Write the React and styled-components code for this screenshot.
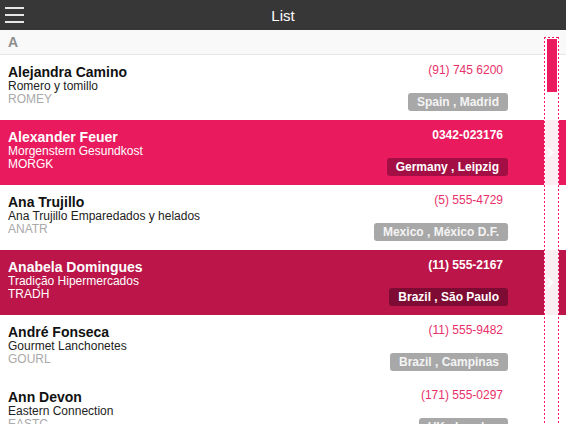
import React from 'react'
import styled, { createGlobalStyle } from 'styled-components'

const GlobalStyle = createGlobalStyle`
  html, body {
    margin: 0;
    padding: 0;
    background: #fff;
    overflow: hidden;
  }
  body {
    font-family: 'Liberation Sans', Arial, sans-serif;
  }
`

const customers = [
  { name: 'Alejandra Camino', company: 'Romero y tomillo', code: 'ROMEY', phone: '(91) 745 6200', place: 'Spain , Madrid' },
  { name: 'Alexander Feuer', company: 'Morgenstern Gesundkost', code: 'MORGK', phone: '0342-023176', place: 'Germany , Leipzig', state: 'selected' },
  { name: 'Ana Trujillo', company: 'Ana Trujillo Emparedados y helados', code: 'ANATR', phone: '(5) 555-4729', place: 'Mexico , México D.F.' },
  { name: 'Anabela Domingues', company: 'Tradição Hipermercados', code: 'TRADH', phone: '(11) 555-2167', place: 'Brazil , São Paulo', state: 'active' },
  { name: 'André Fonseca', company: 'Gourmet Lanchonetes', code: 'GOURL', phone: '(11) 555-9482', place: 'Brazil , Campinas' },
  { name: 'Ann Devon', company: 'Eastern Connection', code: 'EASTC', phone: '(171) 555-0297', place: 'UK , London' },
]

const rowBg = { selected: '#e91a5e', active: '#bb1549' }
const badgeBg = { selected: '#a30f44', active: '#7e0b33' }

const dots = 'repeating-linear-gradient(to bottom, #f5146a 0 2px, transparent 2px 4px)'
const hdots = 'repeating-linear-gradient(to right, #f5146a 0 2px, transparent 2px 4px)'

const Screen = styled.div`
  position: relative;
  width: 566px;
  height: 424px;
  overflow: hidden;
`

const TitleBar = styled.div`
  display: flex;
  align-items: center;
  justify-content: center;
  position: relative;
  height: 30px;
  background: #373737;
  color: #fff;
  font-size: 15px;
`

const MenuButton = styled.div`
  position: absolute;
  left: 5px;
  top: 7px;
  width: 19px;
  display: flex;
  flex-direction: column;
  gap: 5px;

  span {
    display: block;
    height: 2px;
    background: #e6e6e6;
  }
`

const GroupHeader = styled.div`
  height: 24px;
  padding-left: 8px;
  background: #f9f9f9;
  border-bottom: 1px solid #e6e6e6;
  color: #8e8e8e;
  font-size: 14px;
  font-weight: bold;
  line-height: 24px;
`

const Row = styled.div`
  display: flex;
  height: 65px;
  box-sizing: border-box;
  padding: 9px 14px 0 8px;
  background: ${({ state }) => rowBg[state] || '#fff'};
  color: ${({ state }) => (state ? '#fff' : '#111')};
`

const Main = styled.div`
  flex: 1;
  min-width: 0;
`

const Name = styled.div`
  font-size: 14px;
  font-weight: bold;
  line-height: 16px;
`

const Company = styled.div`
  font-size: 12px;
  line-height: 13px;
  color: ${({ state }) => (state ? '#fff' : '#222')};
`

const Code = styled.div`
  font-size: 12px;
  line-height: 13px;
  color: ${({ state }) => (state ? '#fff' : '#a9a9a9')};
`

const Side = styled.div`
  display: flex;
  flex-direction: column;
  align-items: flex-end;
  margin-right: 37px;
`

const Phone = styled.div`
  margin-top: -1px;
  margin-right: 5px;
  font-size: 12px;
  line-height: 14px;
  font-weight: ${({ state }) => (state ? 'bold' : 'normal')};
  color: ${({ state }) => (state ? '#fff' : '#e8306a')};
`

const Badge = styled.div`
  margin-top: 16px;
  height: 18px;
  padding: 0 9px;
  border-radius: 3px;
  background: ${({ state }) => badgeBg[state] || '#a8a8a8'};
  color: ${({ state }) => (state ? '#fff' : '#f4f4f4')};
  font-size: 12px;
  font-weight: bold;
  line-height: 18px;
  white-space: nowrap;
`

const Chevron = styled.div`
  align-self: center;
  margin-top: -9px;
  width: 5px;
  height: 5px;
  border-top: 2px solid ${({ state }) => (state ? '#fff' : '#cfcfcf')};
  border-right: 2px solid ${({ state }) => (state ? '#fff' : '#cfcfcf')};
  transform: rotate(45deg);
`

const ScrollTrack = styled.div`
  position: absolute;
  left: 544px;
  top: 37px;
  bottom: -2px;
  width: 15px;
  box-sizing: border-box;
  padding: 2px 0 0 3px;
  background:
    ${dots} left top / 1px 100% no-repeat,
    ${dots} right top / 1px 100% no-repeat,
    ${hdots} left top / 100% 1px no-repeat,
    rgba(255, 255, 255, 0.93);
`

const ScrollThumb = styled.div`
  width: 10px;
  height: 53px;
  background: #e91a5e;
`

function CustomerRow({ item }) {
  const { state } = item
  return (
    <Row state={state}>
      <Main>
        <Name>{item.name}</Name>
        <Company state={state}>{item.company}</Company>
        <Code state={state}>{item.code}</Code>
      </Main>
      <Side>
        <Phone state={state}>{item.phone}</Phone>
        <Badge state={state}>{item.place}</Badge>
      </Side>
      <Chevron state={state} />
    </Row>
  )
}

export default function App() {
  return (
    <Screen>
      <GlobalStyle />
      <TitleBar>
        <MenuButton>
          <span />
          <span />
          <span />
        </MenuButton>
        List
      </TitleBar>
      <GroupHeader>A</GroupHeader>
      {customers.map(c => (
        <CustomerRow key={c.code} item={c} />
      ))}
      <ScrollTrack>
        <ScrollThumb />
      </ScrollTrack>
    </Screen>
  )
}
